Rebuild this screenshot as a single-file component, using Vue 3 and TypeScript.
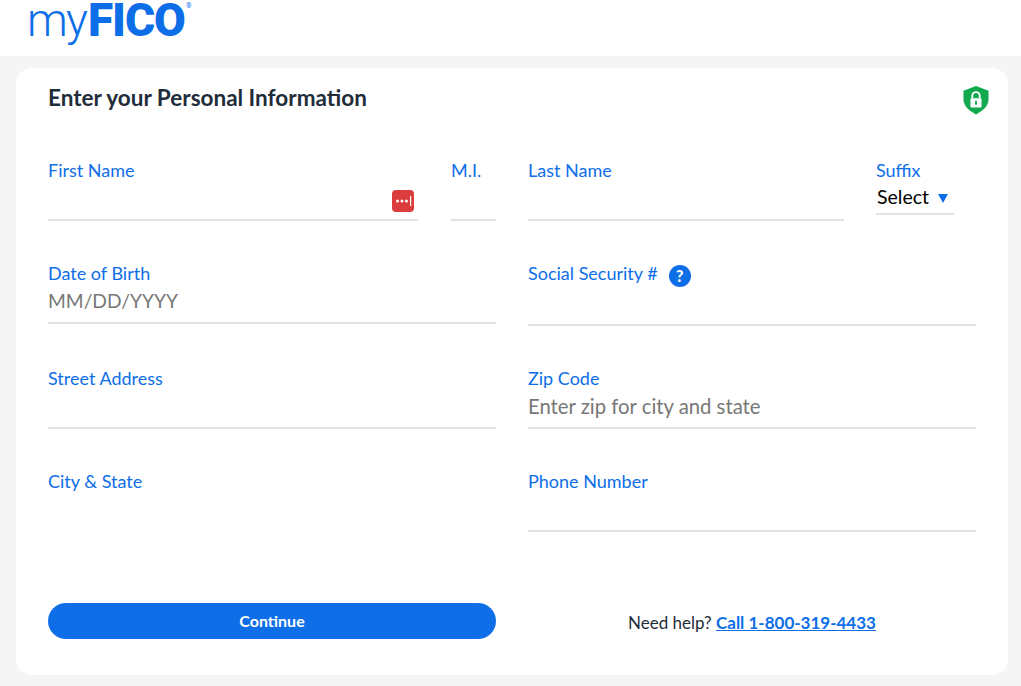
<script setup lang="ts">
const phone = 'Call 1-800-319-4433'
</script>

<template>
  <div class="page">
    <header class="top">
      <div class="logo"><span class="my">my</span><span class="fico">FICO</span><span class="reg">®</span></div>
    </header>
    <main class="card">
      <div class="head">
        <h1>Enter your Personal Information</h1>
        <svg class="shield" width="26" height="30" viewBox="0 0 28 32">
          <path d="M14 1 L27.5 6 V15 C27.5 23 21 28 14 31.5 C7 28 .5 23 .5 15 V6 Z" fill="#12a84e" />
          <rect x="8" y="14" width="12" height="10" rx="1" fill="#fff" />
          <path d="M10 14 V11.5 a4 4 0 0 1 8 0 V14" fill="none" stroke="#fff" stroke-width="2" />
          <rect x="13" y="17" width="2" height="4" fill="#12a84e" />
        </svg>
      </div>

      <div class="row r1">
        <div class="split">
          <div class="field grow">
            <label>First Name</label>
            <div class="input h34">
              <svg class="pw" width="22" height="22" viewBox="0 0 22 22">
                <rect width="22" height="22" rx="4" fill="#db3d3c" />
                <circle cx="5.5" cy="11" r="1.5" fill="#fff" />
                <circle cx="10" cy="11" r="1.5" fill="#fff" />
                <circle cx="14.5" cy="11" r="1.5" fill="#fff" />
                <rect x="18" y="6" width="1.2" height="10" fill="#fff" />
              </svg>
            </div>
          </div>
          <div class="field mi">
            <label>M.I.</label>
            <div class="input h34"></div>
          </div>
        </div>
        <div class="split wide">
          <div class="field grow">
            <label>Last Name</label>
            <div class="input h34"></div>
          </div>
          <div class="field suffix">
            <label>Suffix</label>
            <div class="input select">Select <span class="caret"></span></div>
          </div>
        </div>
      </div>

      <div class="row r2">
        <div class="field">
          <label>Date of Birth</label>
          <div class="input h34 ph dob">MM/DD/YYYY</div>
        </div>
        <div class="field">
          <label class="with-help">Social Security # <span class="help">?</span></label>
          <div class="input ssn"></div>
        </div>
      </div>

      <div class="row r3">
        <div class="field">
          <label>Street Address</label>
          <div class="input h34"></div>
        </div>
        <div class="field">
          <label>Zip Code</label>
          <div class="input h34 ph">Enter zip for city and state</div>
        </div>
      </div>

      <div class="row r4">
        <div class="field">
          <label>City &amp; State</label>
        </div>
        <div class="field">
          <label>Phone Number</label>
          <div class="input h34"></div>
        </div>
      </div>

      <div class="row foot">
        <button type="button">Continue</button>
        <p>Need help? <a href="#">{{ phone }}</a></p>
      </div>
    </main>
  </div>
</template>

<style>
html, body { margin: 0; background: #f5f5f5; }
</style>

<style scoped>
.page {
  width: 1021px;
  height: 686px;
  overflow: hidden;
  background: #f5f5f5;
  font-family: Lato, "Noto Sans", sans-serif;
  color: #1f2d3a;
}
.top {
  height: 56px;
  background: #fff;
  padding-left: 27px;
  box-sizing: border-box;
}
.logo {
  display: flex;
  align-items: flex-start;
  color: #0d6ee8;
  font-family: Roboto, sans-serif;
  font-size: 46px;
  line-height: 41px;
  letter-spacing: -1px;
}
.my { font-weight: 300; font-size: 46px; letter-spacing: -1.9px; }
.fico { font-weight: 900; margin-left: 2px; letter-spacing: -1px; }
.reg { font-size: 7px; line-height: 12px; letter-spacing: 0; margin-left: 1px; }
.card {
  margin: 12px 13px 0 16px;
  height: 607px;
  box-sizing: border-box;
  background: #fff;
  border-radius: 16px;
  padding: 0 32px;
}
.head {
  height: 92px;
  display: flex;
  justify-content: space-between;
  align-items: flex-start;
  margin-right: -13px;
  padding-top: 14px;
  box-sizing: border-box;
}
h1 {
  margin: 2px 0 0;
  font-size: 22.5px;
  line-height: 28px;
  font-weight: 700;
  color: #1f2d3a;
}
.shield { margin-top: 3px; }
.row {
  display: grid;
  grid-template-columns: 448px 448px;
  column-gap: 32px;
}
.r1 { height: 103px; }
.r2 { height: 105px; }
.r3 { height: 103px; }
.r4 { height: 132px; }
.split { display: flex; gap: 33px; }
.split.wide { gap: 32px; width: 426px; }
.field { display: flex; flex-direction: column; min-width: 0; }
.grow { flex: 1; }
.mi { width: 45px; }
.suffix { width: 78px; }
label {
  font-size: 18px;
  line-height: 20px;
  color: #0d6ee8;
  height: 22px;
}
.input {
  position: relative;
  border-bottom: 2px solid #dfe3e3;
  box-sizing: border-box;
  font-size: 20.3px;
}
.h34 { height: 39px; line-height: 32px; }
.ph { color: #777; }
.dob { font-size: 19.2px; }
.ssn { height: 41px; }
.select {
  height: 33px;
  line-height: 30px;
  color: #000;
  font-size: 19.5px;
  padding-left: 1px;
}
.caret {
  display: inline-block;
  margin-left: 4px;
  margin-bottom: 1px;
  width: 0;
  height: 0;
  border-left: 5.5px solid transparent;
  border-right: 5.5px solid transparent;
  border-top: 9px solid #0d6ee8;
}
.pw { position: absolute; right: 4px; top: 8px; }
.with-help { display: flex; align-items: flex-start; gap: 11px; }
.help {
  width: 22px;
  height: 22px;
  flex: none;
  border-radius: 50%;
  background: #0d6ee8;
  color: #fff;
  font-weight: 900;
  font-size: 16px;
  line-height: 22px;
  display: flex;
  align-items: center;
  justify-content: center;
  margin-top: 2px;
}
.foot { align-items: center; }
button {
  height: 36px;
  border: 0;
  border-radius: 18px;
  background: #0d6ee8;
  color: #fff;
  font-family: inherit;
  font-size: 16px;
  font-weight: 700;
  padding: 0 0 2px;
}
p {
  margin: 0;
  padding-top: 2px;
  text-align: center;
  font-size: 17px;
  color: #1f2d3a;
}
a { color: #0d6ee8; font-weight: 700; }
</style>
